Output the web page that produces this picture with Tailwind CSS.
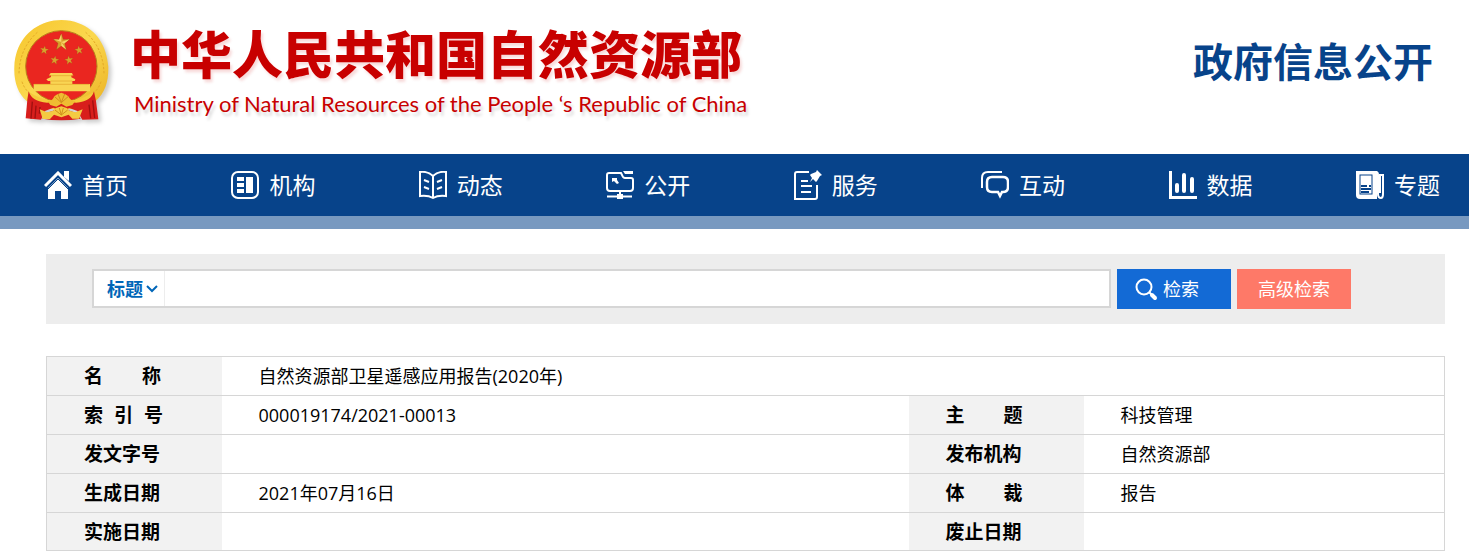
<!DOCTYPE html>
<html lang="zh-CN">
<head>
    <meta charset="UTF-8">
    <meta name="viewport" content="width=device-width, initial-scale=1.0">
    <title>政府信息公开</title>
    <script src="https://cdn.jsdelivr.net/npm/@tailwindcss/browser@4"></script>
</head>
<body class="bg-white text-black font-['Open_Sans','Noto_Sans_CJK_SC',sans-serif]">

    <!-- Header -->
    <header class="flex justify-between pl-3 pr-9 h-[154px]">
        <a href="#" class="flex gap-6 pt-[18px]">
            <svg class="w-[98px] h-[106px] shrink-0 drop-shadow-[3px_3px_2px_rgba(0,0,0,0.2)]" viewBox="36 24 294 318" role="img" aria-label="国徽">
                <defs>
                    <linearGradient id="gold" x1="0" y1="0" x2="1" y2="1">
                        <stop offset="0" stop-color="#f6c52c"/>
                        <stop offset="0.5" stop-color="#fbd84e"/>
                        <stop offset="1" stop-color="#eab023"/>
                    </linearGradient>
                    <path id="star" d="M0-25 6-8 25-8 10 4 15 23 0 12-15 23-10 4-25-8-6-8Z"/>
                </defs>
                <path d="M184 30c20 0 36 3 52 10 52 19 84 66 89 130 1 45-10 79-38 103L184 305 80 273C54 250 41 215 43 170 46 103 84 55 140 37c14-5 29-7 44-7Z" fill="url(#gold)"/>
                <path d="M57 190q2-76 55-123M312 190q-2-76-55-123M66 215q8 24 28 40M303 215q-8 24-28 40" fill="none" stroke="#e3a826" stroke-width="3" stroke-dasharray="7 5"/>
                <circle cx="184" cy="169" r="107" fill="#ea2620" stroke="#b8801a" stroke-width="3"/>
                <g fill="#d8a12c" stroke="#8e4b14" stroke-width="1">
                    <use href="#star" transform="translate(184 96)"/>
                    <use href="#star" transform="translate(133 120) rotate(8) scale(.52)"/>
                    <use href="#star" transform="translate(237 120) rotate(-8) scale(.52)"/>
                    <use href="#star" transform="translate(164 150) rotate(10) scale(.52)"/>
                    <use href="#star" transform="translate(207 150) rotate(-10) scale(.52)"/>
                </g>
                <path d="M184 71v25l-24-8 17 1ZM184 96l15 23-15-12ZM184 96l24-8-16 13Z" fill="#f7d568"/>
                <path d="M152 189h64l3 7h-5v6l12 6-2 5h-7v9h53v22H101v-22h50v-9h-7l-5-5 14-7v-5h-6Z" fill="#f9d553"/>
                <path d="M152 213h64M102 223h166M147 197h73" stroke="#e2a52b" stroke-width="2"/>
                <path d="M84 244c24 17 50 27 76 28l-16 20c-25 0-45-7-62-19Z" fill="#f5ca3b"/>
                <path d="M284 244c-24 17-50 27-76 28l16 20c25 0 45-7 62-19Z" fill="#f5ca3b"/>
                <path d="M86 244q9 31 55 34 18-1 25-9l18-5 18 5q10 9 27 9 44-3 53-34l6 29 7 55-48 1-15-26-24-9-24 8-24-9-25 10-12 26-46-4 5-56Z" fill="#d81e1c"/>
                <path d="M97 275l-4 51M108 287l-3 38M120 291l-2 20M267 284l5 41M278 271l6 53" stroke="#9f1010" stroke-width="4"/>
                <path d="M143 273q14 2 20-14l9-6 12-5 12 5 9 6q7 15 21 14l-9 12-18 5-15-9-15 9-18-5Z" fill="#efbd32"/>
                <path d="M164 260l20 18 20-18M174 252l10 25 10-25" fill="none" stroke="#d18f1b" stroke-width="3"/>
                <path d="M140 309l23-8 21 7 21-7 24 8 13 17q-27 5-58 5t-57-5Z" fill="#d81e1c"/>
                <path d="M119 298l22 9 19-5 8-8 16-5 16 5 8 8 18 5 22-9-11 28h-20l-11-12-22 8-22-8-12 13h-22Z" fill="#f4ca42"/>
                <path d="M165 300l19 15 19-15M178 294l6 21 6-21" fill="none" stroke="#d18f1b" stroke-width="3"/>
            </svg>
            <div class="flex flex-col text-[#c80000]">
                <h1 class="-mt-1 -ml-1 text-[51px] leading-[76px] font-black whitespace-nowrap font-['Noto_Sans_CJK_SC',sans-serif] [text-shadow:2px_3px_3px_rgba(200,0,0,0.15)]">中华人民共和国自然资源部</h1>
                <p class="text-[22px] leading-7 whitespace-nowrap font-[Lato,sans-serif] [text-shadow:2px_4px_3px_rgba(0,0,0,0.15)]">Ministry of Natural Resources of the People ‘s Republic of China</p>
            </div>
        </a>
        <h2 class="pt-8 text-[40px] leading-[60px] font-bold text-[#07438a] whitespace-nowrap">政府信息公开</h2>
    </header>

    <!-- Main navigation -->
    <nav class="flex items-center justify-between h-[75px] pl-11 pr-[29px] bg-[#07438a] border-b-[13px] border-[#7899c0] text-white text-[23px] leading-8">
        <a href="#" class="flex items-center gap-[10px]">
            <svg class="size-7" viewBox="0 0 28 28" fill="#fff"><path d="M4 17 14 7l10 10v11h-7v-8h-6v8H4Z"/><path d="M1 15 14 2l13 13" fill="none" stroke="#fff" stroke-width="3"/><path d="M4 18 14 8l10 10" fill="none" stroke="#07438a" stroke-width="1"/><path d="M20 0h5v10l-5-4Z"/></svg>
            首页
        </a>
        <a href="#" class="flex items-center gap-[10px]">
            <svg class="size-7" viewBox="0 0 28 28" fill="#fff"><rect x="1" y="1" width="26" height="26" rx="6" fill="none" stroke="#fff" stroke-width="2"/><path d="M6 6h7v4H6ZM6 12h7v4H6ZM6 18h7v4H6ZM15 6h7v16h-7Z"/></svg>
            机构
        </a>
        <a href="#" class="flex items-center gap-[10px]">
            <svg class="size-7" viewBox="0 0 28 28" fill="none" stroke="#fff" stroke-width="2"><path d="M14 5Q9 0 1 1v24q8-1 13 2 5-3 13-2V1q-8-1-13 4v22M5 9l5 2M5 16l5 2M18 11l5-2M18 18l5-2"/></svg>
            动态
        </a>
        <a href="#" class="flex items-center gap-[10px]">
            <svg class="size-7" viewBox="0 0 28 28" fill="none" stroke="#fff" stroke-width="2"><path d="M15 2H3Q1 2 1 4v13q0 3 3 3h20q3 0 3-3V9q0-2-2-2h-6q-2 0-3-3ZM14 20v4M1 25.500h25"/><path d="M6 7h5v2l2 3-2 1-3-3-2 1Z" fill="#fff" stroke="none"/><path d="m17 0 2 3h8V0ZM11 23h6v5h-6Z" fill="#fff" stroke="none"/></svg>
            公开
        </a>
        <a href="#" class="flex items-center gap-[10px]">
            <svg class="size-7 overflow-visible" viewBox="0 0 28 28" fill="none" stroke="#fff" stroke-width="2"><path d="M15 1H3Q1 1 1 3v25h20q2 0 2-2V14M7 10h7M7 15h11M7 21h10"/><path d="m23-1 5 5-2 1-3 5-1 1-3-3-3 3 2-4-2-3 1-1 5-2Z" fill="#fff" stroke="none"/></svg>
            服务
        </a>
        <a href="#" class="flex items-center gap-[10px]">
            <svg class="size-7" viewBox="0 0 28 28" fill="none" stroke="#fff" stroke-width="2.500"><path d="M21 1H7Q1 1 1 7v10" stroke-width="2"/><path d="M11 6h11q5 0 5 5v5q0 5-5 5h-1l-2 4-2-4h-6q-5 0-5-5v-5q0-5 5-5Z"/></svg>
            互动
        </a>
        <a href="#" class="flex items-center gap-[10px]">
            <svg class="size-7" viewBox="0 0 28 28" fill="none" stroke="#fff"><path d="M1.500 0v27" stroke-width="3"/><path d="M0 26.500h28" stroke-width="3"/><path d="M8 14v6M15 4v16M23 8v12" stroke-width="4" stroke-linecap="round"/></svg>
            数据
        </a>
        <a href="#" class="flex items-center gap-[10px]">
            <svg class="size-7" viewBox="0 0 28 28" fill="none" stroke="#fff" stroke-width="2"><path d="M0 0h21v28H4Q0 28 0 24Z" fill="#fff" stroke="none"/><path d="M20 1q2 0 2 3v19q0 4 3 4 2 0 2-4V4h-3v18"/><rect x="4" y="4" width="12" height="19" stroke="#07438a" stroke-width="1"/><path d="M5 15h6M5 18h10M5 21h8M13 15h2" stroke="#07438a"/></svg>
            专题
        </a>
    </nav>

    <main class="pl-[46px] pr-6 pt-[25px]">
        <!-- Search -->
        <form class="flex items-start gap-[6px] h-[70px] pt-[15px] pl-[46px] pr-[94px] bg-[#ededed]">
            <div class="flex flex-1 h-[39px] border-2 border-[#d6d6d6] bg-white">
                <div class="flex items-center gap-[2px] w-[71px] pl-[13px] border-r border-[#ededed] text-[#0066b8]">
                    <select aria-label="检索字段" class="appearance-none w-[37px] text-lg leading-7 font-bold bg-transparent">
                        <option>标题</option>
                    </select>
                    <svg class="w-3 h-3" viewBox="0 0 12 12" fill="none" stroke="currentColor" stroke-width="2"><path d="m1 3 5 5 5-5"/></svg>
                </div>
                <input type="text" aria-label="检索词" class="flex-1 px-2 outline-none">
            </div>
            <button type="submit" class="flex items-center gap-1 w-[114px] h-10 pl-[18px] bg-[#136ad5] text-white text-lg leading-7">
                <svg class="w-6 h-6" viewBox="0 0 24 24" fill="none" stroke="#fff"><circle cx="9" cy="10" r="7.500" stroke-width="2"/><path d="m17 18 3 3" stroke-width="4" stroke-linecap="round"/><path d="m14 15 3 3" stroke-width="2"/></svg>
                检索
            </button>
            <button type="button" class="w-[114px] h-10 bg-[#fe7968] text-white text-lg leading-7">高级检索</button>
        </form>

        <!-- Document details -->
        <table class="mt-8 w-full table-fixed border-collapse border border-[#d6d6d6] text-left text-lg leading-7">
            <colgroup>
                <col class="w-[175px]">
                <col>
                <col class="w-[175px]">
                <col class="w-[361px]">
            </colgroup>
            <tbody>
                <tr class="h-[39px] border-b border-[#d6d6d6]">
                    <th scope="row" class="pl-[37px] bg-[#f2f2f2] text-[19px] font-bold"><span class="flex justify-between w-[77px]"><span>名</span><span>称</span></span></th>
                    <td colspan="3" class="pl-[37px]">自然资源部卫星遥感应用报告(2020年)</td>
                </tr>
                <tr class="h-[39px] border-b border-[#d6d6d6]">
                    <th scope="row" class="pl-[37px] bg-[#f2f2f2] text-[19px] font-bold"><span class="flex justify-between w-[79px]"><span>索</span><span>引</span><span>号</span></span></th>
                    <td class="pl-[37px]">000019174/2021-00013</td>
                    <th scope="row" class="pl-[37px] bg-[#f2f2f2] text-[19px] font-bold"><span class="flex justify-between w-[77px]"><span>主</span><span>题</span></span></th>
                    <td class="pl-[37px]">科技管理</td>
                </tr>
                <tr class="h-[39px] border-b border-[#d6d6d6]">
                    <th scope="row" class="pl-[37px] bg-[#f2f2f2] text-[19px] font-bold">发文字号</th>
                    <td class="pl-[37px]"></td>
                    <th scope="row" class="pl-[37px] bg-[#f2f2f2] text-[19px] font-bold">发布机构</th>
                    <td class="pl-[37px]">自然资源部</td>
                </tr>
                <tr class="h-[39px] border-b border-[#d6d6d6]">
                    <th scope="row" class="pl-[37px] bg-[#f2f2f2] text-[19px] font-bold">生成日期</th>
                    <td class="pl-[37px]">2021年07月16日</td>
                    <th scope="row" class="pl-[37px] bg-[#f2f2f2] text-[19px] font-bold"><span class="flex justify-between w-[77px]"><span>体</span><span>裁</span></span></th>
                    <td class="pl-[37px]">报告</td>
                </tr>
                <tr class="h-[38px]">
                    <th scope="row" class="pl-[37px] bg-[#f2f2f2] text-[19px] font-bold">实施日期</th>
                    <td class="pl-[37px]"></td>
                    <th scope="row" class="pl-[37px] bg-[#f2f2f2] text-[19px] font-bold">废止日期</th>
                    <td class="pl-[37px]"></td>
                </tr>
            </tbody>
        </table>
    </main>
</body>
</html>
